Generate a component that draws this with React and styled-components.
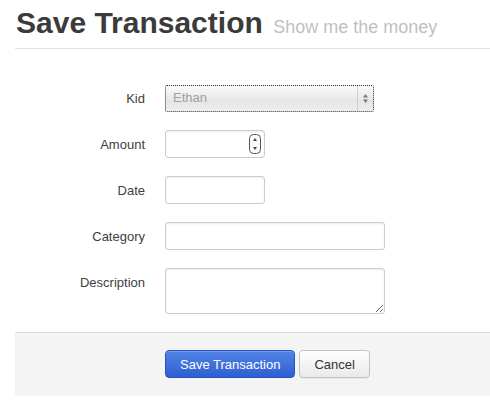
import React from 'react';
import styled, { createGlobalStyle } from 'styled-components';

const GlobalStyle = createGlobalStyle`
  html, body {
    margin: 0;
    padding: 0;
    background: #fff;
    overflow: hidden;
  }
  body {
    font-family: "Liberation Sans", Helvetica, Arial, sans-serif;
    font-size: 13px;
    line-height: 18px;
    color: #404040;
  }
`;

const Page = styled.div`
  padding: 5px 0 0 15px;
`;

const PageHeader = styled.div`
  padding-bottom: 7px;
  margin-bottom: 36px;
  border-bottom: 1px solid #e3e3e3;
`;

const Title = styled.h1`
  margin: 0;
  padding-left: 1px;
  font-size: 30px;
  line-height: 36px;
  font-weight: bold;
  color: #3b3b3b;
  small {
    font-size: 18px;
    line-height: 1;
    font-weight: normal;
    color: #bfbfbf;
    margin-left: 2px;
  }
`;

const Row = styled.div`
  display: flex;
  align-items: flex-start;
  margin-bottom: 18px;
`;

const Label = styled.label`
  width: 130px;
  flex: none;
  padding-top: ${p => p.$top || 6}px;
  text-align: right;
  color: #404040;
  line-height: 18px;
`;

const Controls = styled.div`
  margin-left: 20px;
  display: flex;
`;

const inputBase = `
  box-sizing: border-box;
  padding: 4px;
  font: inherit;
  color: #808080;
  border: 1px solid #ccc;
  border-radius: 3px;
  background: #fff;
  box-shadow: inset 0 1px 2px rgba(0, 0, 0, 0.08);
  outline: none;
`;

const TextInput = styled.input`
  ${inputBase}
  height: 28px;
  width: ${p => p.$w}px;
`;

const NumberBox = styled.div`
  ${inputBase}
  height: 28px;
  width: ${p => p.$w}px;
  display: flex;
  align-items: center;
  justify-content: flex-end;
  padding-right: 3px;
`;

const TextArea = styled.textarea`
  ${inputBase}
  display: block;
  width: 220px;
  height: 46px;
  resize: both;
`;

const SelectBox = styled.div`
  box-sizing: border-box;
  width: 209px;
  height: 27px;
  display: flex;
  align-items: stretch;
  border: 1px dotted #333;
  border-radius: 2px;
  background: linear-gradient(#fafafa, #e6e6e6 60%, #eeeeee);
  color: #a0a0a0;
  cursor: default;
`;

const SelectText = styled.span`
  flex: 1;
  padding-left: 7px;
  line-height: 24px;
`;

const SelectArrow = styled.span`
  width: 15px;
  border-left: 1px solid #cfcfcf;
  display: flex;
  align-items: center;
  justify-content: center;
`;

const Actions = styled.div`
  background: #f4f4f4;
  border-top: 1px solid #dcdcdc;
  padding: 17px 20px 18px 150px;
  display: flex;
  gap: 4px;
`;

const Button = styled.button`
  box-sizing: border-box;
  height: 28px;
  padding: 0 14px;
  font-family: inherit;
  font-size: 13px;
  border-radius: 4px;
  cursor: pointer;
  color: ${p => (p.$primary ? '#fff' : '#333')};
  border: 1px solid ${p => (p.$primary ? '#2753c0' : '#c4c4c4')};
  background: ${p =>
    p.$primary
      ? 'linear-gradient(#5384e6, #2e5fd3)'
      : 'linear-gradient(#ffffff, #e9e9e9)'};
  box-shadow: ${p =>
    p.$primary
      ? 'inset 0 1px 0 rgba(255,255,255,0.2)'
      : '0 1px 1px rgba(0,0,0,0.06)'};
`;

const UpDown = () => (
  <svg width="7" height="11" viewBox="0 0 7 11">
    <path d="M3.5 1 L6 4.5 L1 4.5 Z" fill="#777" />
    <path d="M3.5 10 L6 6.5 L1 6.5 Z" fill="#777" />
  </svg>
);

const Spinner = () => (
  <svg width="12" height="20" viewBox="0 0 12 20">
    <rect x="0.5" y="0.5" width="11" height="19" rx="4" fill="#fbfbfb" stroke="#555" />
    <path d="M6 4 L8 7 L4 7 Z" fill="#444" />
    <path d="M6 16 L8 13 L4 13 Z" fill="#444" />
  </svg>
);

const App = () => (
  <Page>
    <GlobalStyle />
    <PageHeader>
      <Title>
        Save Transaction <small>Show me the money</small>
      </Title>
    </PageHeader>
    <form onSubmit={e => e.preventDefault()}>
      <Row>
        <Label $top={5}>Kid</Label>
        <Controls>
          <SelectBox>
            <SelectText>Ethan</SelectText>
            <SelectArrow>
              <UpDown />
            </SelectArrow>
          </SelectBox>
        </Controls>
      </Row>
      <Row>
        <Label>Amount</Label>
        <Controls>
          <NumberBox $w={100}>
            <Spinner />
          </NumberBox>
        </Controls>
      </Row>
      <Row>
        <Label>Date</Label>
        <Controls>
          <TextInput $w={100} type="text" />
        </Controls>
      </Row>
      <Row>
        <Label>Category</Label>
        <Controls>
          <TextInput $w={220} type="text" />
        </Controls>
      </Row>
      <Row>
        <Label>Description</Label>
        <Controls>
          <TextArea />
        </Controls>
      </Row>
      <Actions>
        <Button $primary type="submit">Save Transaction</Button>
        <Button type="button">Cancel</Button>
      </Actions>
    </form>
  </Page>
);

export default App;
